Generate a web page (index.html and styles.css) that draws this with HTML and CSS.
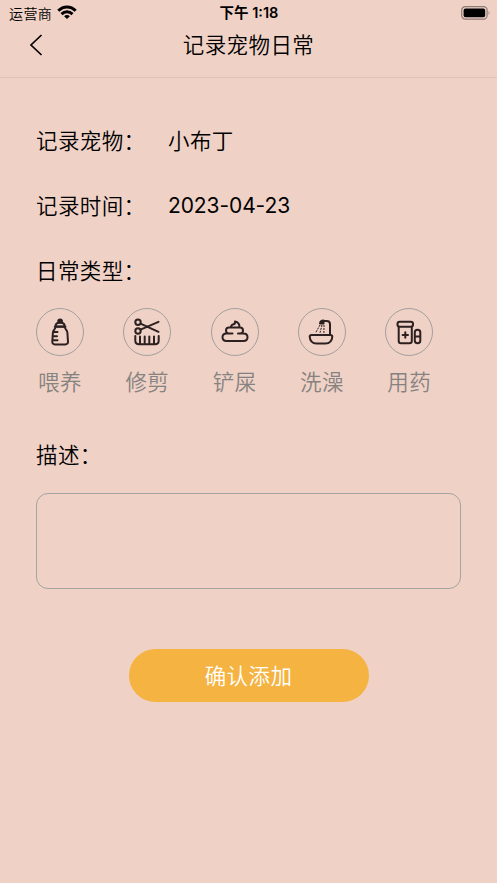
FILE: index.html
```html
<!DOCTYPE html>
<html lang="zh-CN">
<head>
<meta charset="utf-8">
<title>记录宠物日常</title>
<link rel="stylesheet" href="styles.css">
</head>
<body>
<div class="status">
  <div class="carrier"><span>运营商</span>
    <svg width="20" height="16" viewBox="0 0 20 16"><g fill="none" stroke="#000" stroke-width="3"><path d="M1.3 5.7C6.3.6 13.7.6 18.7 5.7"/><path d="M4.5 9.1C7.7 6.1 12.3 6.1 15.5 9.1"/></g><path d="M10 14.100 7.100 11.200C8.700 9.700 11.300 9.700 12.900 11.200Z"/></svg>
  </div>
  <div class="clock">下午 1:18</div>
  <svg class="battery" width="30" height="14" viewBox="0 0 30 14"><rect x=".7" y=".7" width="25.4" height="12.4" rx="3.6" fill="none" stroke="#8c7b76" stroke-width="1.2"/><rect x="2.6" y="2.6" width="21.6" height="8.7" rx="1.8"/><path d="M27.6 4.8q1.8 2.1 0 4.2z" fill="#8c7b76"/></svg>
</div>
<header class="nav">
  <svg class="back" width="14" height="22" viewBox="0 0 14 22"><path d="M12.5 1 2 11 12.5 21" fill="none" stroke="#000" stroke-width="1.7"/></svg>
  <h1>记录宠物日常</h1>
</header>
<main>
  <div class="row"><span class="label">记录宠物：</span><span>小布丁</span></div>
  <div class="row"><span class="label">记录时间：</span><span class="date">2023-04-23</span></div>
  <div class="row"><span class="label">日常类型：</span></div>
  <div class="types">
    <div class="type"><div class="ring">
      <svg viewBox="0 0 48 48"><path d="M19.5 18.5q0-3.3 3-3.7h3.2q3 .4 3 3.700Z"/><path d="M22.300 14.500h3.600v-2q-1.800-2.200-3.600 0z" fill="#2c2020"/><path d="M18.800 18.700h10.700M19.500 19c-.2 2.500-2.500 2.700-2.600 5.700L16.300 33.500q-.1 2.900 2.700 2.900h10.200q2.900 0 2.800-2.900l-.6-8.800c-.2-3-2.300-3.200-2.600-5.700M17 24h4.500M17 28.200h4M17 32.300h4.500"/></svg>
    </div><span>喂养</span></div>
    <div class="type"><div class="ring">
      <svg viewBox="0 0 48 48"><circle cx="15" cy="14.300" r="2.700"/><circle cx="15" cy="23" r="2.700"/><path d="M17.500 15.700 35.500 23.800M17.500 21.700 35.500 13.800M12.300 28v4.500q0 3.700 3.700 3.700h16q3.700 0 3.700-3.700V28M17 28.500v7.200M21.700 28.500v7.200M26.300 28.500v7.200M31 28.500v7.200"/></svg>
    </div><span>修剪</span></div>
    <div class="type"><div class="ring">
      <svg viewBox="0 0 48 48"><path d="M21.500 25.500h-6q-4 0-4 3.700t4 3.700h17q4 0 4-3.700t-4-3.700H27M17 25.200q-2-.4-2-2.800 0-3 3-3h11q3 0 3 3 0 2.400-2 2.800M20 19q.3-2.300 2.500-2.700 1.800-.3 1.500-2.800 4.500 1 4.500 5.500"/></svg>
    </div><span>铲屎</span></div>
    <div class="type"><div class="ring">
      <svg viewBox="0 0 48 48"><path d="M13.500 27h19q1.800 0 1.800 1.800-.5 6.700-6.800 6.700h-9q-6.300 0-6.800-6.700 0-1.800 1.800-1.800ZM32 26.500V16.300q0-3.300-3.300-3.300H26"/><path d="M22 15.500q.3-3 3.500-3v3z" fill="#2c2020"/><path d="m22 17-4.500 8M24 17l-2 8M26 17l-.1 8" stroke-width="1" stroke-linecap="butt" stroke-dasharray="2 1"/></svg>
    </div><span>洗澡</span></div>
    <div class="type"><div class="ring">
      <svg viewBox="0 0 48 48"><rect x="12.500" y="13.800" width="15.500" height="5" rx="2.200"/><path d="M13.700 19.500V33q0 2.300 2.300 2.300h8.500q2.300 0 2.300-2.300V19.500M20.300 24.300v5.400M17.600 27h5.400"/><rect x="29.800" y="21.800" width="5.500" height="13.500" rx="2.750"/><path d="M30 28.500h5"/></svg>
    </div><span>用药</span></div>
  </div>
  <div class="desc">描述：</div>
  <textarea aria-label="描述"></textarea>
  <button>确认添加</button>
</main>
</body>
</html>
```
FILE: styles.css
```css
* { box-sizing: border-box; }
body {
  margin: 0;
  height: 883px;
  background: #efd1c6;
  color: #000;
  font: 350 21.5px/32px "Noto Sans CJK SC", sans-serif;
  letter-spacing: .4px;
  overflow: hidden;
}
svg { display: block; }
.status {
  height: 26px;
  display: grid;
  grid-template-columns: 1fr auto 1fr;
  align-items: center;
  padding: 0 6px 0 9px;
  font-size: 14px;
}
.carrier { display: flex; align-items: center; gap: 5px; height: 24px; line-height: 24px; }
.carrier span { margin-top: -1px; }
.clock { font: 600 14.5px/26px Inter, "Noto Sans CJK SC", sans-serif; letter-spacing: 0; margin-left: -2px; }
.battery { justify-self: end; }
.nav {
  height: 52px;
  display: grid;
  grid-template-columns: 60px 1fr 60px;
  border-bottom: 1px solid #dfc4ba;
}
.back { margin: 8px 0 0 29px; }
h1 { margin: 2px 0 0; font: inherit; text-align: center; }
main { padding: 46px 36px 0; }
.row { display: flex; height: 65px; line-height: 32px; }
.label { width: 132px; white-space: nowrap; }
.date { font-family: Inter, sans-serif; font-weight: 400; font-size: 21px; line-height: 34px; letter-spacing: -.1px; }
.types { display: flex; gap: 39.3px; margin-top: -11px; }
.type { width: 48px; display: flex; flex-direction: column; align-items: center; color: #858280; white-space: nowrap; }
.type span { margin-top: 9px; }
.ring { width: 48px; height: 48px; border: 1px solid #a4a09d; border-radius: 50%; }
.ring svg { width: 48px; height: 48px; margin: -1px; fill: none; stroke: #2c2020; stroke-width: 2; stroke-linecap: round; stroke-linejoin: round; }
.desc { margin-top: 41px; }
textarea {
  display: block;
  width: 425px;
  height: 96px;
  margin-top: 23px;
  background: transparent;
  border: 1px solid #a4a4a0;
  border-radius: 12px;
  resize: none;
}
button {
  display: block;
  width: 240px;
  height: 53px;
  margin: 60px auto 0;
  padding: 0 0 2px;
  border: 0;
  border-radius: 27px;
  background: #f5b341;
  color: #fff;
  font: inherit;
  letter-spacing: inherit;
}
```
